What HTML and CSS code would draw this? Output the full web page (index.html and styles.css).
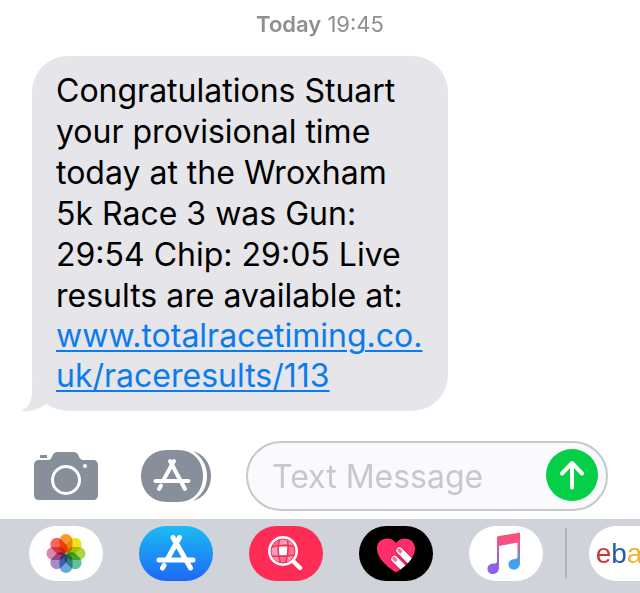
FILE: index.html
```html
<!DOCTYPE html>
<html lang="en">
<head>
<meta charset="utf-8">
<meta name="viewport" content="width=device-width, initial-scale=1">
<title>Messages</title>
<link rel="stylesheet" href="styles.css">
</head>
<body>
<main class="thread">
  <p class="stamp"><strong>Today</strong> <time>19:45</time></p>
  <div class="bubble">
    <p class="message">Congratulations Stuart<br>your provisional time<br>today at the Wroxham<br>5k Race 3 was Gun:<br>29:54 Chip: 29:05 Live<br>results are available at:</p>
    <a class="message link" href="#">www.totalracetiming.co.<wbr>uk/raceresults/113</a>
    <svg class="tail" width="42" height="31" viewBox="0 0 42 31" aria-hidden="true"><path d="M11 0V11C11 21 8 28 0 30.500C10 32 19 29 25 24L30 0Z"/></svg>
  </div>
</main>

<form class="compose">
  <button class="tool" type="button" aria-label="Camera">
    <svg width="64" height="52" viewBox="0 0 64 52">
      <path class="gray" d="M6 5H13V8H6ZM5 10H13C17 10 17.500 8 18.500 5.500C19.500 3 21 2 24 2H39C42 2 43.500 3 44.500 5.500C45.500 8 46.500 10 50 10H59C62 10 64 12 64 15V45C64 48 62 50 59 50H5C2 50 0 48 0 45V15C0 12 2 10 5 10Z"/>
      <circle class="lens" cx="32" cy="30" r="13.500"/>
      <circle class="white" cx="51" cy="16" r="2"/>
    </svg>
  </button>
  <button class="tool" type="button" aria-label="Apps">
    <svg width="70" height="52" viewBox="0 0 70 52">
      <path class="gray" d="M26 0H37C53 0 62 12 62 26S53 52 37 52H26C10 52 0 40 0 26S10 0 26 0Z"/>
      <path class="gray" d="M52 1C63 4 70 14 70 26S63 48 52 51C61 45 66 37 66 26S61 7 52 1Z"/>
      <path class="glyph" d="M14.500 31H47.500M29 11L44 39M33 11L23 29M20 35.500L18 39"/>
    </svg>
  </button>
  <div class="field">
    <input class="entry" type="text" placeholder="Text Message" aria-label="Text Message">
    <button class="send" type="submit" aria-label="Send">
      <svg width="52" height="52" viewBox="0 0 52 52"><path class="arrow" d="M26 38.500V14M16 24.500L26 14L36 24.500"/></svg>
    </button>
  </div>
</form>

<nav class="tray" aria-label="Message apps">
  <button class="app photos" type="button" aria-label="Photos">
    <svg width="74" height="55" viewBox="-37 -27.500 74 55">
      <g class="petals">
        <rect x="-6.500" y="-19.500" width="13" height="19" rx="6.500" fill="#fb9a2c"/>
        <rect x="-6.500" y="-19.500" width="13" height="19" rx="6.500" fill="#eee21f" transform="rotate(45)"/>
        <rect x="-6.500" y="-19.500" width="13" height="19" rx="6.500" fill="#b0d449" transform="rotate(90)"/>
        <rect x="-6.500" y="-19.500" width="13" height="19" rx="6.500" fill="#62c39a" transform="rotate(135)"/>
        <rect x="-6.500" y="-19.500" width="13" height="19" rx="6.500" fill="#6aa7dd" transform="rotate(180)"/>
        <rect x="-6.500" y="-19.500" width="13" height="19" rx="6.500" fill="#a58bc8" transform="rotate(225)"/>
        <rect x="-6.500" y="-19.500" width="13" height="19" rx="6.500" fill="#dc86ae" transform="rotate(270)"/>
        <rect x="-6.500" y="-19.500" width="13" height="19" rx="6.500" fill="#f5665b" transform="rotate(315)"/>
      </g>
    </svg>
  </button>
  <button class="app store" type="button" aria-label="App Store">
    <svg width="74" height="55" viewBox="0 0 74 55"><path class="glyph bold" d="M20 34H54M34 11.500L51.500 42M40.500 11.500L29 32M25 39.500L23.500 42"/></svg>
  </button>
  <button class="app search" type="button" aria-label="Images">
    <svg width="74" height="55" viewBox="0 0 74 55">
      <defs><clipPath id="globe"><circle cx="34" cy="25" r="12"/></clipPath></defs>
      <path d="M43 34L51 42" stroke="#fff" stroke-width="4.500" stroke-linecap="round"/>
      <circle cx="34" cy="25" r="15" fill="#fff"/>
      <g clip-path="url(#globe)">
        <rect x="20" y="11" width="28" height="28" fill="#ff9db4"/>
        <path d="M20 11H30V20H20ZM39 20H48V30H39ZM30 30H38V39H30Z" fill="#ff6d8e"/>
        <path d="M30 21H38V29H30Z" fill="#fff"/>
        <path d="M20 22Q34 17 48 21M20 30Q34 31 48 29M31 11Q27 25 32 39M38 11Q41 25 36 39" fill="none" stroke="#ee3158" stroke-width="1.500"/>
      </g>
      <circle cx="34" cy="25" r="12" fill="none" stroke="#ee3158" stroke-width="1"/>
    </svg>
  </button>
  <button class="app touch" type="button" aria-label="Digital Touch">
    <svg width="74" height="55" viewBox="0 0 74 55">
      <defs><clipPath id="heart"><path id="heart-shape" d="M37 46.500C32 43 18 34 18 22.500C18 12 31 9 37 17C43 9 56 12 56 22.500C56 34 42 43 37 46.500Z"/></clipPath></defs>
      <use href="#heart-shape" fill="#ff2d6b"/>
      <g clip-path="url(#heart)" stroke-linecap="round" fill="none">
        <path d="M40.500 24.500L58 42M35.500 33L50 47.500" stroke="#d81c55" stroke-width="8.500"/>
        <path d="M40.500 24.500L58 42M35.500 33L50 47.500" stroke="#fff" stroke-width="6.500"/>
        <path d="M40 24L41.500 25.500M35 32.500L36.500 34" stroke="#ff6e98" stroke-width="3.500"/>
      </g>
    </svg>
  </button>
  <button class="app music" type="button" aria-label="Music">
    <svg width="74" height="55" viewBox="0 0 74 55">
      <defs><linearGradient id="tune" gradientUnits="userSpaceOnUse" x1="38" y1="7" x2="38" y2="48"><stop offset="0" stop-color="#ff4f72"/><stop offset=".3" stop-color="#f0528c"/><stop offset=".6" stop-color="#9b62c9"/><stop offset="1" stop-color="#8460ff"/></linearGradient>
      <linearGradient id="tune-side" gradientUnits="userSpaceOnUse" x1="38" y1="7" x2="38" y2="43"><stop offset="0" stop-color="#ff4f72"/><stop offset=".3" stop-color="#f0528c"/><stop offset=".8" stop-color="#45a0ee"/><stop offset="1" stop-color="#35a8f5"/></linearGradient></defs>
      <path fill="url(#tune)" d="M30 10L49 7V16.500L30 20V41C30 45 28 48 24 48C21 48 18.500 46 18.500 43C18.500 39 21.500 37.500 25 37.500C27 37.500 28 37 28 35V13C28 11 28.500 10.300 30 10Z"/>
      <path fill="url(#tune-side)" d="M48 7L50 6.500Q51 6.500 51 8V37C51 41 48.500 43.500 45 43.500C42 43.500 39.500 41.500 39.500 38.500C39.500 35 42 33.500 46 33C48 32.700 48.500 32 48.500 30V16Z"/>
    </svg>
  </button>
  <span class="divider"></span>
  <button class="app ebay" type="button"><span class="red">e</span><span class="blue">b</span><span class="gold">a</span><span class="green">y</span></button>
</nav>
</body>
</html>
```

FILE: styles.css
```css
* { box-sizing: border-box; }

body {
  margin: 0;
  min-height: 100vh;
  display: flex;
  flex-direction: column;
  overflow-x: hidden;
  background: #fff;
  color: #000;
  font-family: Inter, "Liberation Sans", sans-serif;
}

p { margin: 0; }
svg { display: block; }

button {
  padding: 0;
  border: 0;
  background: none;
  font: inherit;
  cursor: pointer;
}

.thread {
  flex: 1;
  padding: 12px 32px 30px;
}

.stamp {
  margin-bottom: 20px;
  color: #8e8e93;
  font-size: 22px;
  line-height: 24px;
  text-align: center;
}

.stamp strong { font-weight: 600; }

.bubble {
  position: relative;
  width: 416px;
  max-width: 100%;
  padding: 14px 24px 15px;
  border-radius: 36px;
  background: #e5e5ea;
}

.message {
  font-size: 32px;
  line-height: 41px;
}

.link {
  display: block;
  color: #0b7cee;
  line-height: 40px;
  text-decoration-thickness: 2px;
  text-underline-offset: 3px;
}

.tail {
  position: absolute;
  left: -11px;
  bottom: 0;
  fill: #e5e5ea;
}

.compose {
  display: flex;
  align-items: center;
  padding: 0 32px 8px 34px;
}

.tool { margin-right: 43px; }
.tool + .tool { margin-right: 35px; }

.gray { fill: #878f9b; }
.white { fill: #fff; }
.lens { fill: none; stroke: #fff; stroke-width: 3; }

.glyph {
  fill: none;
  stroke: #fff;
  stroke-width: 4;
  stroke-linecap: round;
}

.glyph.bold { stroke-width: 5; }

.field {
  flex: 1;
  min-width: 0;
  height: 70px;
  display: flex;
  align-items: center;
  padding: 0 8px 0 24px;
  border: 2px solid #c7c7cc;
  border-radius: 35px;
  background: #fafafc;
}

.entry {
  flex: 1;
  min-width: 0;
  padding: 2px 0 0;
  border: 0;
  outline: 0;
  background: none;
  font: 32px/40px Inter, "Liberation Sans", sans-serif;
}

.entry::placeholder { color: #c7c7cc; opacity: 1; }

.send {
  margin-bottom: 2px;
  border-radius: 50%;
  background: #04cf47;
}

.arrow {
  fill: none;
  stroke: #fff;
  stroke-width: 4;
  stroke-linecap: round;
  stroke-linejoin: round;
}

.tray {
  display: flex;
  align-items: center;
  gap: 36px;
  padding: 7px 0 12px 29px;
  overflow: hidden;
  background: #d1d3da;
}

.app {
  flex: none;
  width: 74px;
  height: 55px;
  overflow: hidden;
  border-radius: 28px;
  background: #fff;
}

.petals { isolation: isolate; }
.petals rect { mix-blend-mode: multiply; }

.store { background: linear-gradient(#1cbcf3, #1d68f6); }
.search { background: #ff2d55; }
.touch { background: #000; }

.divider {
  flex: none;
  width: 2px;
  height: 51px;
  margin: 0 -14px;
  background: #b0b3bb;
}

.ebay {
  font: 28px/52px "Liberation Sans", sans-serif;
}

.red { color: #d0323c; }
.blue { color: #2c5ba8; }
.gold { color: #eeb42c; }
.green { color: #86b817; }
```
